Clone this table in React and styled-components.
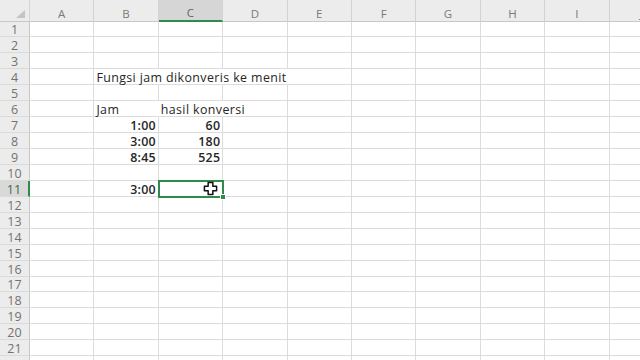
import styled, { createGlobalStyle } from "styled-components";

const GlobalStyle = createGlobalStyle`
  html, body {
    margin: 0;
    padding: 0;
    width: 640px;
    height: 360px;
    overflow: hidden;
    background: #ffffff;
  }
`;

const COLS = ["A", "B", "C", "D", "E", "F", "G", "H", "I", "J"];
const ROW_COUNT = 22;

const data = {
  B4: { text: "Fungsi jam dikonveris ke menit" },
  B6: { text: "Jam" },
  C6: { text: "hasil konversi" },
  B7: { text: "1:00", num: true },
  C7: { text: "60", num: true },
  B8: { text: "3:00", num: true },
  C8: { text: "180", num: true },
  B9: { text: "8:45", num: true },
  C9: { text: "525", num: true },
  B11: { text: "3:00", num: true },
};

// gridlines hidden where text spills into the next cell
const overflow = new Set(["B4", "C4", "D4", "B6", "C6"]);

const SELECTED_COL = "C";
const SELECTED_ROW = 11;

const App = () => {
  return (
    <>
      <GlobalStyle />
      <Sheet>
        <Corner>
          <CornerMark />
        </Corner>
        {COLS.map((c) => (
          <ColHeader key={c} $active={c === SELECTED_COL}>
            {c}
          </ColHeader>
        ))}
        {Array.from({ length: ROW_COUNT }, (_, i) => i + 1).map((r) => (
          <Row key={r} r={r} />
        ))}
      </Sheet>
    </>
  );
};

const Row = ({ r }) => (
  <>
    <RowHeader $active={r === SELECTED_ROW}>{r}</RowHeader>
    {COLS.map((c) => {
      const id = c + r;
      const cell = data[id];
      const selected = c === SELECTED_COL && r === SELECTED_ROW;
      return (
        <Cell
          key={id}
          $num={cell?.num}
          $noRight={overflow.has(id)}
          $selected={selected}
        >
          {cell && <CellText $num={cell.num}>{cell.text}</CellText>}
          {selected && (
            <>
              <Handle />
              <Pointer viewBox="0 0 16 16">
                <path
                  d="M5.5 1.5h5v4h4v5h-4v4h-5v-4h-4v-5h4z"
                  fill="#ffffff"
                  stroke="#111111"
                  strokeWidth="1.6"
                  strokeLinejoin="round"
                />
              </Pointer>
            </>
          )}
        </Cell>
      );
    })}
  </>
);

export default App;

const Sheet = styled.div`
  display: grid;
  grid-template-columns: 30px repeat(10, 64.4px);
  grid-template-rows: 21.5px repeat(22, 15.95px);
  width: 640px;
  height: 360px;
  overflow: hidden;
  font-family: "Open Sans", "Noto Sans", sans-serif;
  background: #ffffff;
`;

const Corner = styled.div`
  position: relative;
  background: #ececec;
  border-right: 1px solid #d4d4d4;
  border-bottom: 1px solid #c8c8c8;
  box-sizing: border-box;
`;

const CornerMark = styled.div`
  position: absolute;
  right: 4px;
  bottom: 3px;
  width: 0;
  height: 0;
  border-left: 9px solid transparent;
  border-bottom: 8px solid #c4c4c4;
`;

const ColHeader = styled.div`
  display: flex;
  align-items: flex-end;
  justify-content: center;
  box-sizing: border-box;
  padding-bottom: 1px;
  font-size: 11.5px;
  line-height: 12px;
  color: ${({ $active }) => ($active ? "#5f6b62" : "#7a7a7a")};
  background: ${({ $active }) => ($active ? "#d6d6d6" : "#ececec")};
  border-right: 1px solid #d2d2d2;
  border-bottom: ${({ $active }) =>
    $active ? "2px solid #2f8a4c" : "1px solid #c8c8c8"};
`;

const RowHeader = styled.div`
  display: flex;
  align-items: flex-end;
  justify-content: center;
  box-sizing: border-box;
  font-size: 12.5px;
  line-height: 12px;
  color: ${({ $active }) => ($active ? "#3d6b48" : "#727272")};
  background: ${({ $active }) => ($active ? "#d9d9d9" : "#ececec")};
  border-bottom: 1px solid #dadada;
  border-right: ${({ $active }) =>
    $active ? "2px solid #2f8a4c" : "1px solid #c8c8c8"};
`;

const Cell = styled.div`
  position: relative;
  display: flex;
  align-items: flex-end;
  justify-content: ${({ $num }) => ($num ? "flex-end" : "flex-start")};
  box-sizing: border-box;
  padding: 0 2px;
  border-bottom: 1px solid #dcdcdc;
  border-right: 1px solid
    ${({ $noRight }) => ($noRight ? "transparent" : "#dcdcdc")};
  outline: ${({ $selected }) => ($selected ? "2px solid #2f8a4c" : "none")};
  outline-offset: -1px;
  z-index: ${({ $selected }) => ($selected ? 1 : 0)};
  min-width: 0;
`;

const CellText = styled.span`
  white-space: nowrap;
  font-size: 12.4px;
  line-height: 12px;
  letter-spacing: ${({ $num }) => ($num ? "0.2px" : "0.4px")};
  font-weight: ${({ $num }) => ($num ? 600 : 400)};
  color: #262626;
`;

const Handle = styled.div`
  position: absolute;
  right: -4px;
  bottom: -4px;
  width: 4px;
  height: 4px;
  background: #2f8a4c;
  border: 1px solid #ffffff;
`;

const Pointer = styled.svg`
  position: absolute;
  left: 44px;
  top: 0px;
  width: 15px;
  height: 15px;
`;
